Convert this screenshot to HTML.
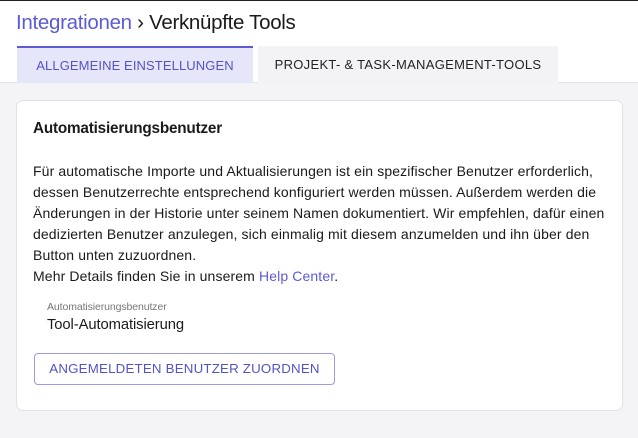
<!DOCTYPE html>
<html><head><meta charset="utf-8"><style>
*{margin:0;padding:0;box-sizing:border-box}
body{width:638px;height:438px;overflow:hidden;background:#f4f4f6;font-family:"Liberation Sans",sans-serif;color:#222;position:relative}
.top{position:absolute;left:0;top:0;width:638px;height:83px;background:#fff;border-top:1px solid #222;border-bottom:1px solid #e4e4e8}
h1{position:absolute;left:16px;top:10px;font-size:20.5px;font-weight:normal;letter-spacing:-0.3px;color:#1a1a1a}
h1 span{color:#5b5bd6}
.tab{position:absolute;top:45px;height:37px;font-size:13px;line-height:37px;text-align:center;letter-spacing:0.1px}
.t1{left:17px;width:236px;background:#e6e6fb;border-top:2px solid #5b5bd6;color:#5553c4;line-height:35px}
.t2{left:258px;width:300px;background:#f3f3f5;color:#222;letter-spacing:0.3px}
.card{position:absolute;left:16px;top:100px;width:607px;height:311px;background:#fff;border:1px solid #e2e2e6;border-radius:7px}
.h{position:absolute;left:16px;top:19px;font-size:15.3px;font-weight:bold;letter-spacing:-0.2px;color:#1a1a1a}
.p{position:absolute;left:16px;top:60px;font-size:14px;line-height:21px;letter-spacing:0.12px;white-space:nowrap;color:#1a1a1a}
.p a{color:#5b5bd6;text-decoration:none}
.lbl{position:absolute;left:30px;top:200px;font-size:10.5px;color:#777;letter-spacing:-0.1px}
.val{position:absolute;left:30px;top:216px;font-size:14.8px;letter-spacing:-0.1px;color:#1a1a1a}
.btn{position:absolute;left:17px;top:252px;width:301px;height:32px;border:1px solid #9b9be6;border-radius:4px;color:#5553c4;font-size:13.3px;line-height:30px;text-align:center;letter-spacing:0.2px}
</style></head><body>
<div class="top">
<h1><span>Integrationen</span> › Verknüpfte Tools</h1>
<div class="tab t1">ALLGEMEINE EINSTELLUNGEN</div>
<div class="tab t2">PROJEKT- &amp; TASK-MANAGEMENT-TOOLS</div>
</div>
<div class="card">
<div class="h">Automatisierungsbenutzer</div>
<div class="p">Für automatische Importe und Aktualisierungen ist ein spezifischer Benutzer erforderlich,<br>dessen Benutzerrechte entsprechend konfiguriert werden müssen. Außerdem werden die<br>Änderungen in der Historie unter seinem Namen dokumentiert. Wir empfehlen, dafür einen<br>dedizierten Benutzer anzulegen, sich einmalig mit diesem anzumelden und ihn über den<br>Button unten zuzuordnen.<br>Mehr Details finden Sie in unserem <a>Help Center</a>.</div>
<div class="lbl">Automatisierungsbenutzer</div>
<div class="val">Tool-Automatisierung</div>
<div class="btn">ANGEMELDETEN BENUTZER ZUORDNEN</div>
</div>
</body></html>
